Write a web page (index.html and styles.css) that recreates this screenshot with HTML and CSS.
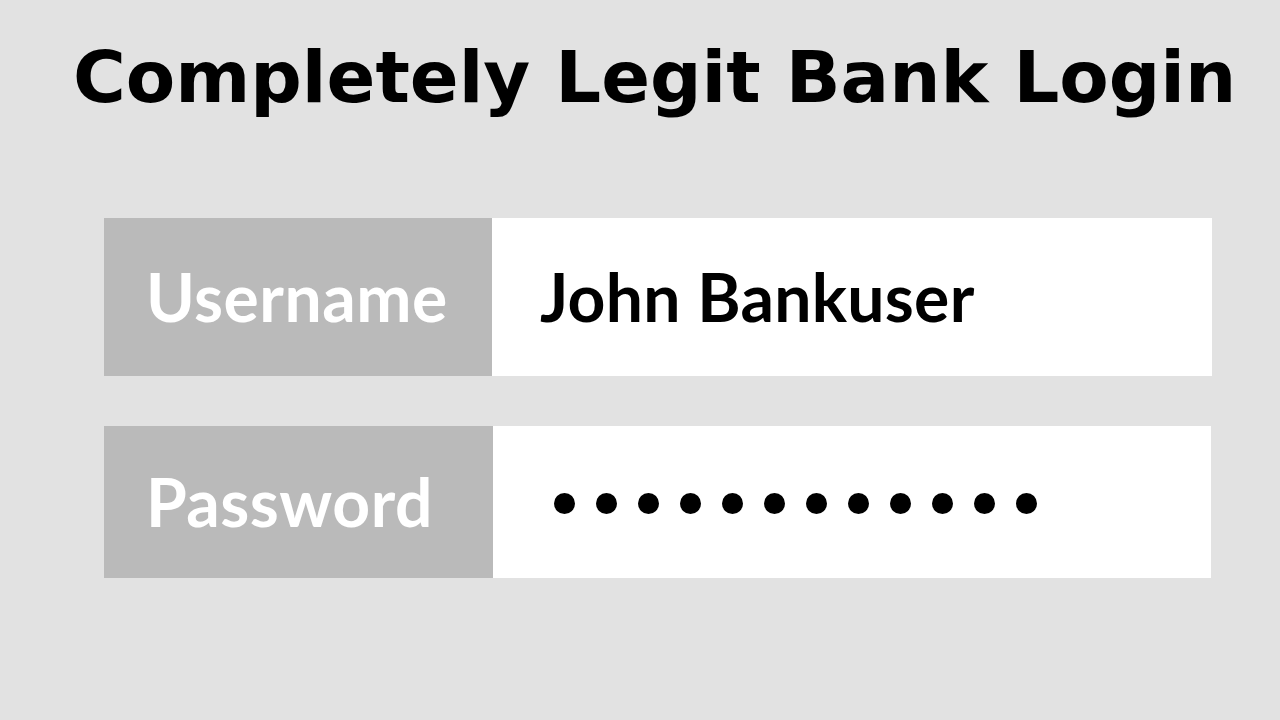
FILE: index.html
```html
<!DOCTYPE html>
<html>
<head>
  <meta charset="UTF-8">
  <title>Completely Legit Bank Login</title>
  <link rel="stylesheet" href="styles.css">
</head>
<body>
  <h1 class="title">Completely Legit Bank Login</h1>

  <!-- Login fields -->
  <div class="login">
    <div class="field field-user">
      <div class="field-label">Username</div>
      <div class="field-value">John Bankuser</div>
    </div>

    <div class="field field-pass">
      <div class="field-label">Password</div>
      <div class="field-value">
        <div class="mask">
          <span class="dot"></span><span class="dot"></span><span class="dot"></span>
          <span class="dot"></span><span class="dot"></span><span class="dot"></span>
          <span class="dot"></span><span class="dot"></span><span class="dot"></span>
          <span class="dot"></span><span class="dot"></span><span class="dot"></span>
        </div>
      </div>
    </div>
  </div>
</body>
</html>
```

FILE: styles.css
```css
body {
  margin: 0;
  background-color: #e2e2e2;
  font-family: 'Lato', 'DejaVu Sans', sans-serif;
}

.title {
  margin: 0;
  padding: 41px 0 0 73px;
  font-family: 'DejaVu Sans', sans-serif;
  font-weight: bold;
  font-size: 72px;
  line-height: 1;
  color: #000;
  white-space: nowrap;
}

.login {
  display: flex;
  flex-direction: column;
  gap: 50px;
  margin-top: 105px;
  padding-left: 104px;
}

.field {
  display: flex;
  width: 1108px;
  height: 158px;
}

.field-pass {
  width: 1107px;
  height: 152px;
}

.field-label {
  display: flex;
  align-items: center;
  width: 388px;
  padding-left: 42px;
  box-sizing: border-box;
  background-color: #bababa;
  color: #fff;
  font-weight: bold;
  font-size: 66px;
  line-height: 1;
  letter-spacing: 0.5px;
}

.field-pass .field-label {
  width: 389px;
}

.field-value {
  flex: 1;
  display: flex;
  align-items: center;
  padding-left: 48px;
  background-color: #fff;
  color: #000;
  font-weight: bold;
  font-size: 66px;
  line-height: 1;
  letter-spacing: 0.3px;
}

.field-pass .field-value {
  padding-left: 61px;
}

/* masked password characters */
.mask {
  display: flex;
  gap: 21px;
  margin-top: 2px;
}

.dot {
  width: 21px;
  height: 21px;
  border-radius: 50%;
  background-color: #000;
}
```
